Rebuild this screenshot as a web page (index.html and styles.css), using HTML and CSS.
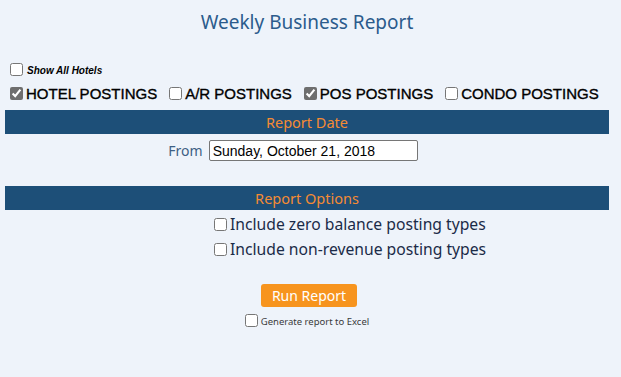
FILE: index.html
```html
<html>
<head>
    <meta name="viewport" content="width=device-width, initial-scale=1">
    <title>Weekly Business Report</title>
    <link rel="stylesheet" href="styles.css">
</head>
<body>
<div id="report">
    <h1 class="title">Weekly Business Report</h1>

    <div class="showAll">
        <input id="showAll" type="checkbox" />
        <label for="showAll">Show All Hotels</label>
    </div>

    <div class="postings">
        <span class="posting"><input id="hotel" type="checkbox" checked /><label for="hotel">HOTEL POSTINGS</label></span>
        <span class="posting"><input id="ar" type="checkbox" /><label for="ar">A/R POSTINGS</label></span>
        <span class="posting"><input id="pos" type="checkbox" checked /><label for="pos">POS POSTINGS</label></span>
        <span class="posting"><input id="condo" type="checkbox" /><label for="condo">CONDO POSTINGS</label></span>
    </div>

    <div class="bar">Report Date</div>
    <div class="dateRow">
        <label for="from" class="fromLabel">From</label>
        <input id="from" type="text" value="Sunday, October 21, 2018" />
    </div>

    <div class="bar options">Report Options</div>
    <div class="optionList">
        <div class="option"><input id="zero" type="checkbox" /><label for="zero">Include zero balance posting types</label></div>
        <div class="option"><input id="nonrev" type="checkbox" /><label for="nonrev">Include non-revenue posting types</label></div>
    </div>

    <div class="runRow">
        <input id="run" type="button" value="Run Report" />
    </div>
    <div class="excelRow">
        <input id="excel" type="checkbox" />
        <label for="excel">Generate report to Excel</label>
    </div>
</div>
</body>
</html>
```

FILE: styles.css
```css
body {background:#eef3fa; margin:0; padding:0 12px 0 5px; font-family:"Noto Sans", sans-serif;}
input[type=checkbox] {width:13px; height:13px; margin:0; accent-color:#6e6e6e;}

.title {margin:0; padding-top:9px; height:31px; text-align:center; font-size:19px; font-weight:normal; color:#2b5b8c;}

.showAll {display:flex; align-items:center; margin:22px 0 0 5px; height:14px;}
.showAll label {font-family:"Liberation Sans", Arial, sans-serif; font-size:10px; font-weight:bold; font-style:italic; margin-left:4px; margin-top:2px;}

.postings {display:flex; gap:12px; margin:9px 0 0 5px; height:16px; align-items:center;}
.posting {display:flex; align-items:center;}
.posting label {font-family:"Liberation Sans", Arial, sans-serif; font-size:15px; margin-left:3px; color:#000; -webkit-text-stroke:0.35px #000;}

.bar {background:#1d4f78; color:#f58b33; text-align:center; font-size:14.5px; height:24px; line-height:24px; margin-top:9px;}
.bar.options {margin-top:25px;}

.dateRow {display:flex; justify-content:center; align-items:center; gap:6px; margin-top:6px; padding-right:28px;}
.fromLabel {color:#3d5f84; font-size:14px;}
#from {width:209px; height:21px; border:1px solid #767676; border-radius:2px; padding:0 3px; font-family:"Liberation Sans", Arial, sans-serif; font-size:14px; color:#000; background:#fff;}

.optionList {display:flex; flex-direction:column; align-items:flex-start; gap:5px; margin:4px 0 0 209px;}
.option {display:flex; align-items:center; color:#1b2b48; font-size:15.7px; height:20px;}
.option input {margin-right:3px;}

.runRow {text-align:center; margin-top:25px;}
#run {background:#f7941e; color:#fff; border:none; border-radius:3px; width:96px; height:23px; font-family:"Noto Sans", sans-serif; font-size:14px; padding:0; margin-left:4px;}

.excelRow {display:flex; justify-content:center; align-items:center; margin-top:5px;}
.excelRow label {font-size:9.5px; color:#3a3a3a; margin-left:3px; margin-top:3px;}
```
